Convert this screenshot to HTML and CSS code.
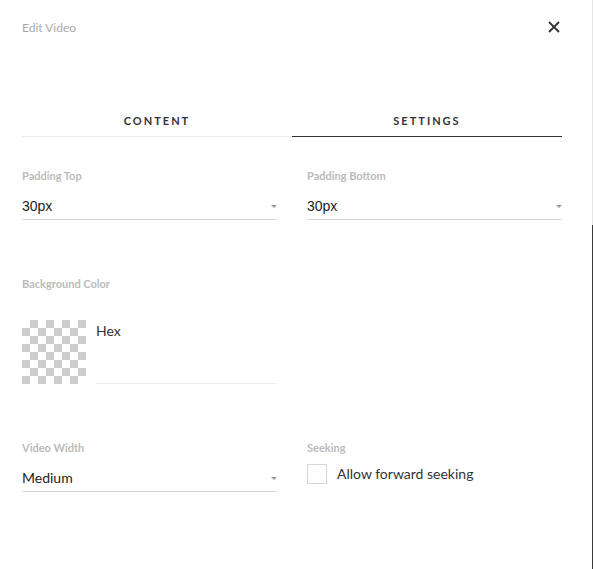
FILE: index.html
```html
<!DOCTYPE html>
<html>
<head>
<meta charset="utf-8">
<link rel="stylesheet" href="styles.css">
</head>
<body>
<div class="page">
  <div class="panel">
    <header class="header">
      <span class="title">Edit Video</span>
      <span class="close">
        <svg width="12" height="12" viewBox="0 0 12 12"><path d="M1 1L11 11M11 1L1 11" stroke="#333" stroke-width="1.8" fill="none"/></svg>
      </span>
    </header>
    <nav class="tabs">
      <div class="tab">CONTENT</div>
      <div class="tab active">SETTINGS</div>
    </nav>
    <div class="grid">
      <div class="field">
        <div class="label">Padding Top</div>
        <div class="select num"><span>30px</span><i class="caret"></i></div>
      </div>
      <div class="field">
        <div class="label">Padding Bottom</div>
        <div class="select num"><span>30px</span><i class="caret"></i></div>
      </div>
    </div>
    <div class="grid section">
      <div class="field">
        <div class="label">Background Color</div>
        <div class="color-row">
          <div class="checker"></div>
          <div class="hex">Hex</div>
        </div>
      </div>
    </div>
    <div class="grid section">
      <div class="field">
        <div class="label">Video Width</div>
        <div class="select"><span>Medium</span><i class="caret"></i></div>
      </div>
      <div class="field">
        <div class="label">Seeking</div>
        <label class="check">
          <span class="box"></span>
          <span>Allow forward seeking</span>
        </label>
      </div>
    </div>
  </div>
  <div class="scrollbar">
    <div class="track"></div>
    <div class="thumb"></div>
  </div>
</div>
</body>
</html>
```
FILE: styles.css
```css
* { box-sizing: border-box; }
html, body { margin: 0; padding: 0; background: #fff; }
body { font-family: Lato, "Open Sans", sans-serif; color: #333; }
.page { display: flex; width: 593px; height: 569px; overflow: hidden; }
.panel { width: 592px; padding: 20px 30px 0 22px; }
.scrollbar { width: 1px; display: flex; flex-direction: column; }
.track { height: 225px; background: #e4e4e4; }
.thumb { flex: 1; background: #3a3a3a; }

.header { display: flex; justify-content: space-between; align-items: center; height: 16px; }
.title { font-size: 12px; line-height: 16px; color: #aaa; }
.close { display: flex; width: 12px; height: 12px; margin-right: 2px; margin-top: -2px; }

.tabs { display: grid; grid-template-columns: 1fr 1fr; margin-top: 67px; }
.tab { text-align: center; font-size: 11px; font-weight: 700; letter-spacing: 2px; line-height: 16px; padding: 10px 0 7px; border-bottom: 1px solid #eee; color: #333; }
.tab.active { border-bottom-color: #333; }

.grid { display: grid; grid-template-columns: 1fr 1fr; column-gap: 30px; margin-top: 31px; }
.grid.section { margin-top: 56px; }
.label { font-size: 11px; font-weight: 700; line-height: 16px; color: #bbb; }
.select { display: flex; justify-content: space-between; align-items: center; margin-top: 12px; padding-bottom: 3px; border-bottom: 1px solid #d6d6d6; font-size: 14px; line-height: 20px; color: #222; }
.select.num { font-family: Arial, "Liberation Sans", sans-serif; }
.caret { width: 0; height: 0; border-left: 3px solid transparent; border-right: 3px solid transparent; border-top: 3px solid #9a9a9a; }

.color-row { display: flex; margin-top: 28px; }
.checker { width: 64px; height: 64px; flex: none;
  background: conic-gradient(#ccc 25%, #fff 0 50%, #ccc 0 75%, #fff 0) 0 0 / 16px 16px;
}
.hex { flex: 1; margin-left: 10px; height: 64px; padding-top: 1px; border-bottom: 1px solid #eee; font-size: 14px; line-height: 20px; color: #333; }

.check { display: flex; align-items: center; margin-top: 8px; font-size: 14px; line-height: 20px; color: #333; }
.box { width: 20px; height: 20px; border: 1px solid #d6d6d6; margin-right: 10px; }
```
